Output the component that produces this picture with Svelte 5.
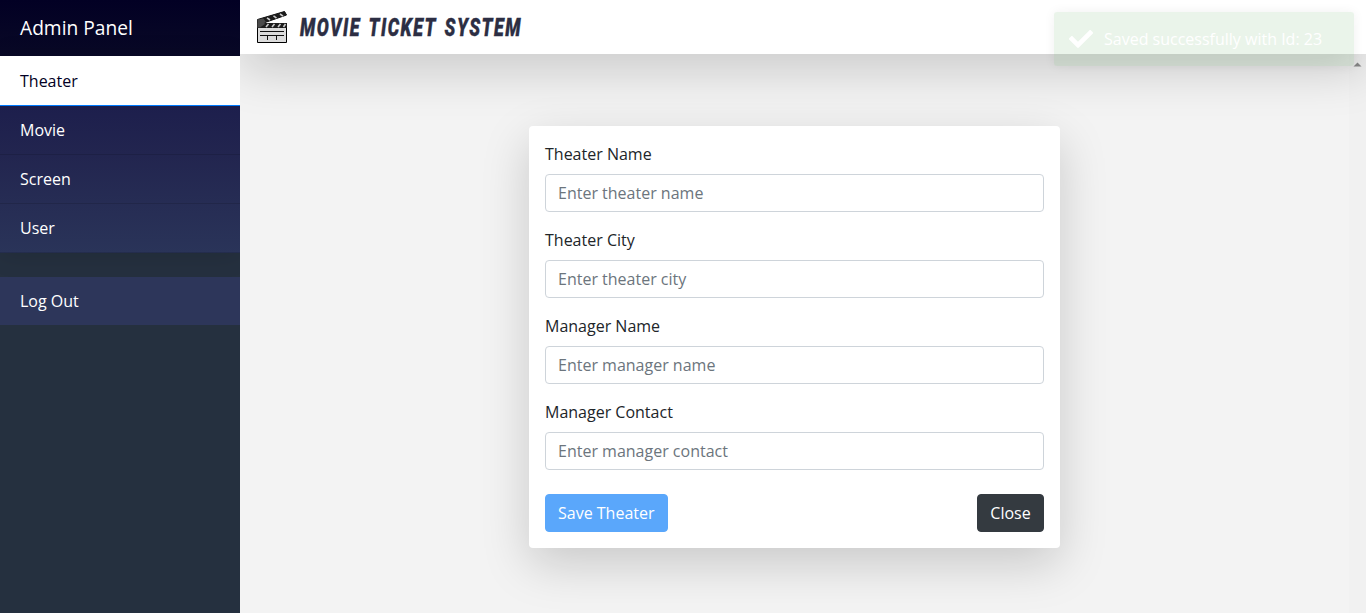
<script>
  const links = ['Movie', 'Screen', 'User'];
  const fields = [
    ['Theater Name', 'Enter theater name'],
    ['Theater City', 'Enter theater city'],
    ['Manager Name', 'Enter manager name'],
    ['Manager Contact', 'Enter manager contact'],
  ];
</script>

<div class="app">
  <aside>
    <div class="heading">Admin Panel</div>
    <nav>
      <a class="active" href="#theater">Theater</a>
      {#each links as link}
        <a href="#{link}">{link}</a>
      {/each}
    </nav>
    <a class="logout" href="#logout">Log Out</a>
  </aside>

  <div class="page">
    <header>
      <svg class="clapper" width="32" height="34" viewBox="0 0 32 34">
        <path d="M1.500 9.500L28.500 1.500L30.500 5L9 12.500V17H1.500Z" fill="#4a4a4a" stroke="#111" />
        <path d="M7 8L28.500 1.500L30.500 5L10 12Z" fill="#1c1c1c" />
        <path d="M11 7.800l3 2.200M17.500 5.900l3 2.200M24 4l3 2.200" stroke="#ccc" stroke-width="1.600" />
        <path d="M1.500 17H30.500V32.500H1.500Z" fill="#dcdcdc" stroke="#000" />
        <path d="M1 13H31V18H1Z" fill="#1c1c1c" />
        <path d="M1.500 9.500L6 9L9 14L4 17.500H1.500Z" fill="#4a4a4a" />
        <path d="M10 17l2.500-3M16 17l2.500-3M22 17l2.500-3M27.500 17l2-3" stroke="#ccc" stroke-width="1.600" />
        <path d="M4 21.500H28M4 25.500H28M11.500 26V30M20.500 26V30" stroke="#111" fill="none" />
      </svg>
      <svg class="title" width="240" height="34" viewBox="0 0 240 34">
        <text x="2" y="25.500" textLength="222" lengthAdjust="spacingAndGlyphs">MOVIE TICKET SYSTEM</text>
      </svg>
    </header>

    <main>
      <form>
        {#each fields as [label, hint]}
          <label>
            <span>{label}</span>
            <input type="text" placeholder={hint} />
          </label>
        {/each}
        <div class="actions">
          <button class="save" type="button">Save Theater</button>
          <button class="close" type="button">Close</button>
        </div>
      </form>
      <div class="track">
        <svg width="9" height="5" viewBox="0 0 9 5"><path d="M0.500 4.500L4.500 0.500L8.500 4.500Z" fill="#8b8b8b" /></svg>
      </div>
    </main>
  </div>

  <div class="toast">
    <svg width="24" height="24" viewBox="0 0 512 512"><path fill="#fff" d="M173.900 439.400l-166.400-166.400c-10-10-10-26.200 0-36.200l36.200-36.200c10-10 26.200-10 36.200 0L192 312.700 432.100 72.600c10-10 26.200-10 36.200 0l36.200 36.200c10 10 10 26.200 0 36.200l-294.400 294.400c-10 10-26.200 10-36.200 0z" /></svg>
    <span>Saved successfully with Id: 23</span>
  </div>
</div>

<style>
  :global(body) { overflow: hidden; }
  .app {
    position: relative;
    display: flex;
    height: 613px;
    font: 400 16px/24px "Open Sans", sans-serif;
    background: #f3f3f3;
    color: #212529;
  }
  aside {
    width: 240px;
    flex: none;
    display: flex;
    flex-direction: column;
    overflow: hidden;
    background: #25303f;
    color: #fff;
    z-index: 2;
  }
  .heading {
    height: 56px;
    box-sizing: border-box;
    padding: 14px 20px;
    font-size: 19.2px;
    line-height: 28px;
    background: linear-gradient(#020024, #090926);
  }
  nav {
    background: linear-gradient(#18184a, #22254f 50%, #2a3459);
    box-shadow: 0 2px 24px rgba(0, 0, 0, 0.12);
  }
  nav a, .logout {
    display: block;
    height: 49px;
    box-sizing: border-box;
    padding: 12px 20px;
    border-bottom: 1px solid rgba(0, 0, 0, 0.125);
    color: inherit;
    text-decoration: none;
  }
  nav .active {
    height: 50px;
    padding-top: 13px;
    background: #fff;
    color: #020024;
    border-bottom-color: #007bff;
  }
  .logout {
    height: 48px;
    margin-top: 24px;
    background: #2d365a;
    border: 0;
    position: relative;
  }
  .page { flex: 1; display: flex; flex-direction: column; }
  header {
    height: 54px;
    box-sizing: border-box;
    display: flex;
    align-items: flex-start;
    gap: 10px;
    padding: 10px 16px;
    background: #fff;
    box-shadow: 0 16px 48px rgba(0, 0, 0, 0.175);
    z-index: 1;
  }
  .title { overflow: visible; }
  .title text {
    font: italic 900 26px Roboto, sans-serif;
    letter-spacing: 2.2px;
    word-spacing: 3px;
    fill: #2c2e43;
    stroke: #2c2e43;
    stroke-width: 0.4px;
  }
  main { flex: 1; display: flex; padding-top: 72px; position: relative; }
  form {
    width: 531px;
    height: 422px;
    margin-left: 289px;
    box-sizing: border-box;
    padding: 16px;
    border-radius: 4px;
    background: #fff;
    box-shadow: 0 16px 48px rgba(0, 0, 0, 0.175);
  }
  label { display: block; margin-bottom: 16px; }
  label span { display: block; margin-bottom: 8px; }
  input {
    display: block;
    width: 100%;
    height: 38px;
    box-sizing: border-box;
    padding: 6px 12px;
    border: 1px solid #ced4da;
    border-radius: 4px;
    font: inherit;
  }
  input::placeholder { color: #6c757d; opacity: 1; }
  .actions { display: flex; justify-content: space-between; margin-top: 24px; }
  button {
    height: 38px;
    padding: 6px 12px;
    border: 1px solid transparent;
    border-radius: 4px;
    color: #fff;
    font: inherit;
  }
  .save { background: #5aa7fb; border-color: #5aa7fb; }
  .close { width: 67px; background: #343a40; border-color: #343a40; }
  .track {
    width: 17px;
    margin: -72px 0 0 auto;
    padding-top: 7px;
    box-sizing: border-box;
    text-align: center;
    line-height: 0;
    background: #f1f1f1;
  }
  .toast {
    position: absolute;
    z-index: 4;
    top: 12px;
    left: 1054px;
    width: 300px;
    height: 54px;
    box-sizing: border-box;
    display: flex;
    align-items: center;
    gap: 11px;
    padding: 0 15px;
    border-radius: 3px;
    background: rgba(81, 163, 81, 0.12);
    color: #fff;
    box-shadow: 0 0 12px rgba(0, 0, 0, 0.06);
    white-space: nowrap;
  }
</style>
